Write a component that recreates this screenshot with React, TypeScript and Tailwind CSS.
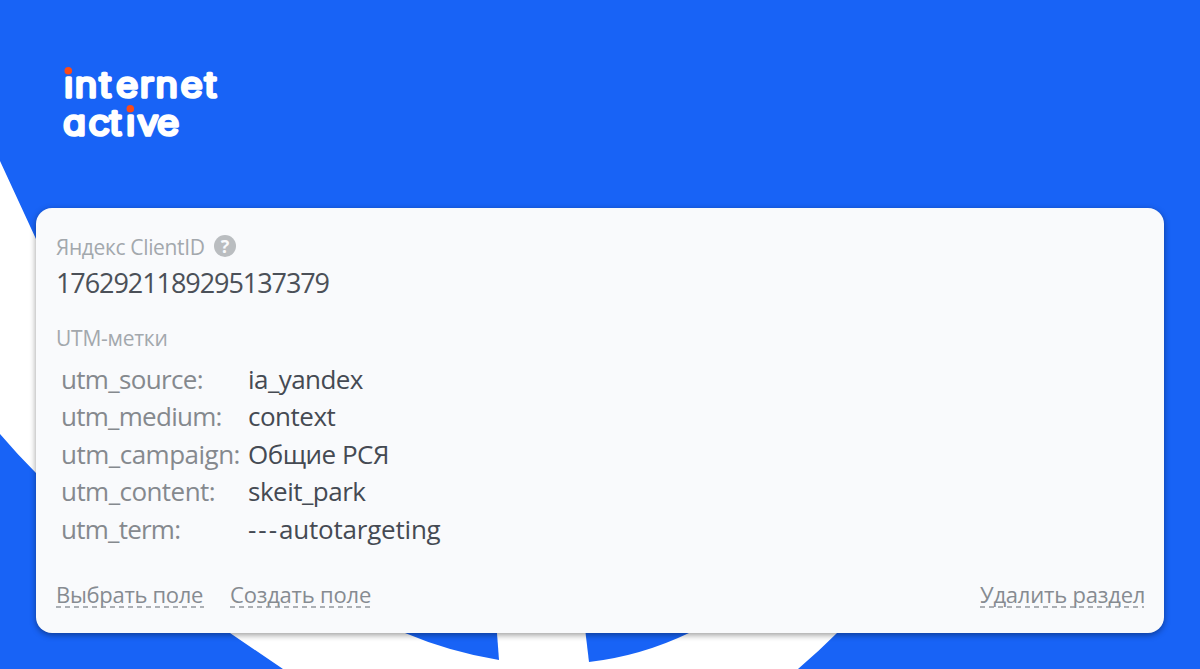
type UtmRow = { label: string; value: string; labelClass: string; valueClass: string };

const utmRows: UtmRow[] = [
  { label: "utm_source:", value: "ia_yandex", labelClass: "tracking-[-0.67px]", valueClass: "tracking-[-0.56px]" },
  { label: "utm_medium:", value: "context", labelClass: "tracking-[-0.73px]", valueClass: "tracking-[-0.49px]" },
  { label: "utm_campaign:", value: "Общие РСЯ", labelClass: "tracking-[-0.5px]", valueClass: "tracking-[-0.49px]" },
  { label: "utm_content:", value: "skeit_park", labelClass: "tracking-[-0.55px]", valueClass: "tracking-[-0.5px]" },
  { label: "utm_term:", value: "---autotargeting", labelClass: "tracking-[-0.76px]", valueClass: "tracking-[-0.22px]" },
];

function Backdrop() {
  return (
    <svg className="absolute inset-0" width="1200" height="669" viewBox="0 0 1200 669" aria-hidden="true">
      <path d="M0 161 L36 239 L60 290 L900 560 Q870 602 837 633 Q819 651 798 669 L283 669 L230 633 Q120 560 36 473 Q17 454 0 434 Z" fill="#fff" />
      <path d="M390 620 L405 633 Q450 652 499 660 L496 620 Z" fill="#1863f6" />
      <path d="M584 620 L589 662 Q641 656 689 633 L700 620 Z" fill="#1863f6" />
    </svg>
  );
}

function Logo() {
  return (
    <svg className="block" width="170" height="84" viewBox="56 60 170 84">
      <g
        transform="scale(1.1 1)"
        fill="#fff"
        stroke="#fff"
        strokeWidth="3.6"
        strokeLinejoin="round"
        fontSize="34"
        fontWeight="300"
        style={{ fontFamily: "Inter, sans-serif", fontFeatureSettings: '"cv11"' }}>
        <text y="97" x="58.4 68.2 90.8 105.6 127.3 141.6 164.4 186.4">internet</text>
        <text y="135" x="57.4 80.8 100 114.8 125 142.9">active</text>
      </g>
      {/* dots of both i letters */}
      <rect x="62" y="62" width="12.5" height="14" fill="#1863f6" />
      <rect x="125.5" y="102" width="10.5" height="12" fill="#1863f6" />
      <circle cx="68.3" cy="70.7" r="3.8" fill="#fb4b18" />
      <circle cx="130.3" cy="108.7" r="3.8" fill="#fb4b18" />
    </svg>
  );
}

function DashedLink({ text, className }: { text: string; className: string }) {
  return (
    <a className={`relative block h-[27px] whitespace-nowrap text-[22px] leading-[26px] text-[#868b91] ${className}`}>
      {text}
      <svg className="absolute bottom-0 left-0 h-[2px] w-full" aria-hidden="true">
        <line x1="0" y1="1" x2="100%" y2="1" stroke="#91969c" strokeWidth="1.5" strokeDasharray="5 4" />
      </svg>
    </a>
  );
}

export default function App() {
  return (
    <div className="relative h-[669px] w-[1200px] overflow-hidden bg-[#1863f6] font-['Open_Sans','Noto_Sans',sans-serif]">
      <Backdrop />
      <div className="relative flex h-full flex-col px-9">
        <header className="h-52 shrink-0 pt-[60px] pl-5">
          <Logo />
        </header>
        <main className="flex h-[425px] flex-col rounded-2xl bg-[#f9fafc] px-5 pt-[25px] shadow-[0_2px_6px_rgba(0,0,0,0.4)]">
          <div className="flex h-[26px] items-center gap-2">
            <h2 className="w-[150px] whitespace-nowrap pt-px text-[21px] leading-[26px] tracking-[-0.35px] text-[#a3a8ad]">Яндекс ClientID</h2>
            <span className="flex size-[22px] items-center justify-center rounded-full bg-[#babdc0] text-[18px] font-bold leading-none text-[#f9fafc]">?</span>
          </div>
          <p className="mt-[6px] h-[36px] text-[27px] leading-[36px] tracking-[-1.07px] text-[#4b5058]">1762921189295137379</p>
          <h2 className="mt-[24px] h-[26px] text-[21px] leading-[26px] tracking-[-0.25px] text-[#a3a8ad]">UTM-метки</h2>
          <dl className="mt-[9.5px] text-[26px] leading-[37.5px]">
            {utmRows.map((row) => {
              const dashes = row.value.match(/^-*/)![0];
              return (
                <div key={row.label} className="flex h-[37.5px] whitespace-nowrap pl-[5px]">
                  <dt className={`w-[187px] shrink-0 text-[#85898e] ${row.labelClass}`}>{row.label}</dt>
                  <dd className={`text-[#454a53] ${row.valueClass}`}>
                    {dashes && <span className="tracking-[2px]">{dashes}</span>}
                    {row.value.slice(dashes.length)}
                  </dd>
                </div>
              );
            })}
          </dl>
          <div className="mt-[32.5px] flex">
            <DashedLink text="Выбрать поле" className="w-[148px] tracking-[-0.3px]" />
            <DashedLink text="Создать поле" className="ml-[26px] w-[142px] tracking-[-0.2px]" />
            <DashedLink text="Удалить раздел" className="ml-auto w-[164px] tracking-[-0.2px]" />
          </div>
        </main>
      </div>
    </div>
  );
}
